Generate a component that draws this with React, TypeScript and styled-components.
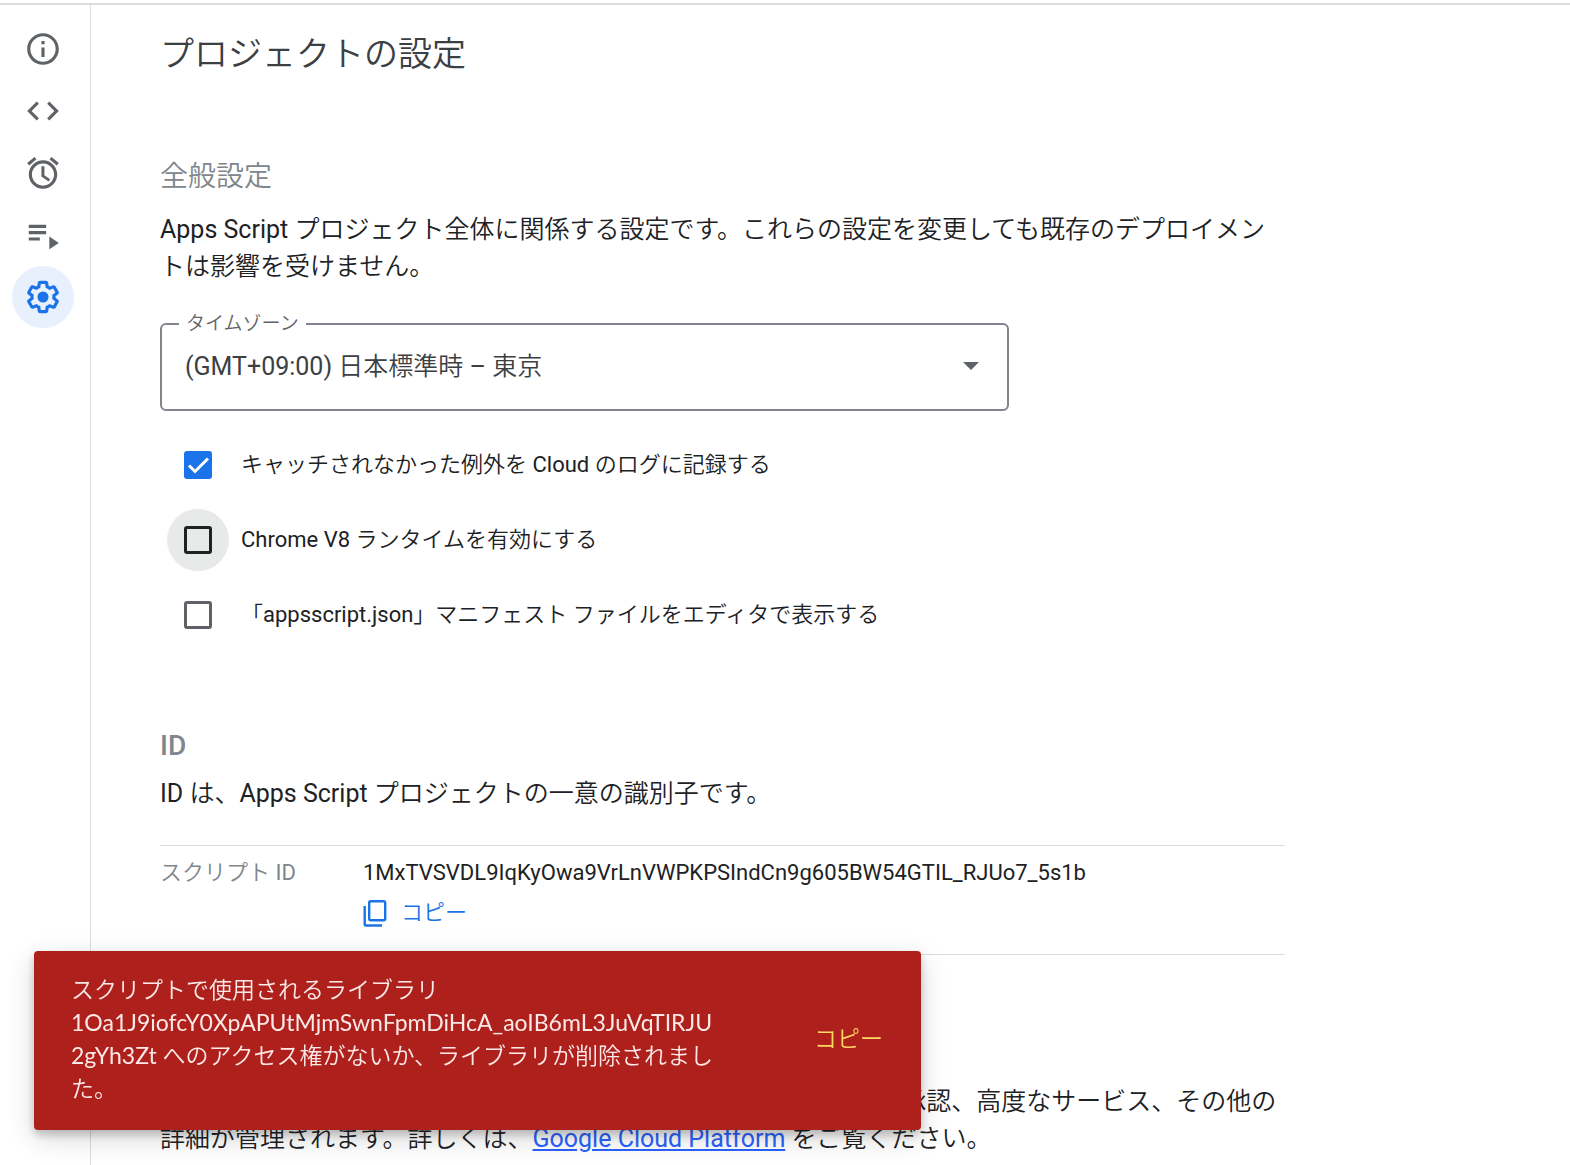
import React from "react";
import styled, { createGlobalStyle, css } from "styled-components";

const line = "#dadce0";
const ink = "#202124";
const grey = "#5f6368";
const muted = "#80868b";
const blue = "#1a73e8";
const cjk = `"Noto Sans CJK JP DemiLight", "Noto Sans CJK JP Light", "Noto Sans CJK JP", sans-serif`;

const GlobalStyle = createGlobalStyle`
  * { box-sizing: border-box; }
  body {
    margin: 0;
    background: #fff;
    color: ${ink};
    font: 400 25px/37px Roboto, ${cjk};
    overflow: hidden;
  }
  button, select, input { font: inherit; color: inherit; margin: 0; }
`;

const Page = styled.div`
  display: flex;
  height: 100vh;
  padding-top: 3px;
`;

const Shell = styled.div`
  display: flex;
  flex: 1;
  min-width: 0;
  border-top: 2px solid ${line};
`;

const Sidebar = styled.nav`
  display: flex;
  flex-direction: column;
  align-items: center;
  flex: 0 0 91px;
  padding: 13px 16px 0 12px;
  border-right: 1px solid ${line};
`;

const NavButton = styled.button<{ $active?: boolean }>`
  display: flex;
  align-items: center;
  justify-content: center;
  width: 62px;
  height: 62px;
  padding: 0;
  border: 0;
  border-radius: 50%;
  background: ${(p) => (p.$active ? "#e8f0fe" : "transparent")};
  color: ${(p) => (p.$active ? blue : grey)};
  cursor: pointer;
`;

const Main = styled.main`
  flex: 1;
  min-width: 0;
  overflow: hidden;
  padding: 24px 69px 0;
`;

const Content = styled.div`
  max-width: 1125px;
`;

const Title = styled.h1`
  margin: 0 0 78px;
  color: #3c4043;
  font-size: 34px;
  line-height: 50px;
  font-weight: 400;
`;

const Section = styled.section`
  margin-bottom: 74px;
`;

const Heading = styled.h2`
  margin: 0 0 14px;
  color: ${muted};
  font-size: 28px;
  line-height: 40px;
  font-weight: 400;
`;

const LatinHeading = styled(Heading)`
  margin-bottom: 9px;
  font-weight: 500;
`;

const Text = styled.p`
  margin: 0;
`;

const Link = styled.a`
  color: #2962ff;
`;

const Field = styled.fieldset`
  position: relative;
  width: 849px;
  max-width: 100%;
  margin: 27px 0 16px;
  padding: 0;
  border: 2px solid ${muted};
  border-radius: 6px;
`;

const Legend = styled.legend`
  margin-left: 17px;
  padding: 0 7px;
  color: ${grey};
  font-size: 19px;
  line-height: 24px;
`;

const Select = styled.select`
  display: block;
  width: 100%;
  height: 73px;
  padding: 0 64px 12px 23px;
  border: 0;
  outline: 0;
  appearance: none;
  background: transparent;
  color: #3c4043;
`;

const Caret = styled.svg`
  position: absolute;
  right: 28px;
  top: 26px;
  pointer-events: none;
`;

const Option = styled.label`
  display: flex;
  align-items: center;
  gap: 12px;
  height: 75px;
  padding-left: 7px;
  font-size: 22px;
  line-height: 32px;
  cursor: pointer;
`;

const Ripple = styled.span<{ $hot?: boolean }>`
  display: grid;
  place-items: center;
  width: 62px;
  height: 62px;
  border-radius: 50%;
  background: ${(p) => (p.$hot ? "#e8eae9" : "transparent")};
`;

const Check = styled.input<{ $hot?: boolean }>`
  grid-area: 1 / 1;
  width: 28px;
  height: 28px;
  appearance: none;
  border: 3px solid ${(p) => (p.$hot ? ink : grey)};
  border-radius: 3px;
  ${(p) =>
    p.defaultChecked &&
    css`
      border-color: ${blue};
      background: ${blue};
    `}
`;

const Tick = styled.svg`
  grid-area: 1 / 1;
  pointer-events: none;
`;

const IdList = styled.dl`
  display: grid;
  grid-template-columns: 203px 1fr;
  height: 110px;
  margin: 33px 0 0;
  padding-top: 11px;
  border: solid ${line};
  border-width: 1px 0;
  font-size: 22px;
  line-height: 32px;
`;

const Term = styled.dt`
  color: ${muted};
`;

const Value = styled.dd`
  margin: 0;
`;

const CopyButton = styled.button`
  display: flex;
  align-items: center;
  gap: 14px;
  margin-top: 8px;
  padding: 0;
  border: 0;
  background: none;
  color: ${blue};
  cursor: pointer;
`;

const Toast = styled.div`
  position: fixed;
  left: 34px;
  bottom: 35px;
  display: flex;
  align-items: center;
  justify-content: space-between;
  width: 887px;
  height: 179px;
  padding: 0 38px 4px 37px;
  border-radius: 4px;
  background: #ad201c;
  box-shadow: 0 5px 8px rgba(0, 0, 0, 0.2), 0 8px 28px rgba(0, 0, 0, 0.16);
  color: #fce8e6;
  font-family: Lato, ${cjk};
  font-size: 23px;
  line-height: 33px;
`;

const Message = styled.p`
  margin: 0;
`;

const ToastButton = styled.button`
  padding: 0;
  border: 0;
  background: none;
  color: #fdd663;
  cursor: pointer;
`;

const Icon = ({ children, size = 38 }: { children: React.ReactNode; size?: number }) => (
  <svg width={size} height={size} viewBox="0 0 24 24" fill="currentColor" aria-hidden="true">
    {children}
  </svg>
);

const navItems = [
  {
    label: "概要",
    icon: <path d="M11 7h2v2h-2zm0 4h2v6h-2zm1-9C6.480 2 2 6.480 2 12s4.480 10 10 10 10-4.480 10-10S17.520 2 12 2zm0 18c-4.410 0-8-3.590-8-8s3.590-8 8-8 8 3.590 8 8-3.590 8-8 8z" />,
  },
  {
    label: "エディタ",
    icon: <path d="M9.400 16.600L4.800 12l4.600-4.600L8 6l-6 6 6 6 1.400-1.400zm5.200 0l4.600-4.600-4.600-4.600L16 6l6 6-6 6-1.400-1.400z" />,
  },
  {
    label: "トリガー",
    icon: <path d="M22 5.720l-4.600-3.860-1.290 1.530 4.600 3.860L22 5.720zM7.880 3.390L6.600 1.860 2 5.710l1.290 1.530 4.590-3.850zM12.900 7.800H11v6.400l4.500 3.200 1-1.500-3.600-2.500zM12 4c-4.970 0-9 4.030-9 9s4.020 9 9 9c4.970 0 9-4.030 9-9s-4.030-9-9-9zm0 16c-3.870 0-7-3.130-7-7s3.130-7 7-7 7 3.130 7 7-3.130 7-7 7z" />,
  },
  {
    label: "実行数",
    icon: <path d="M3 5.500h11v2H3zM3 9.500h11v2H3zM3 13.500h7v2H3zM16 13v8l6-4z" />,
  },
  {
    label: "プロジェクトの設定",
    active: true,
    icon: (
      <>
        <path d="M13.850 22.250h-3.700c-.74 0-1.360-.54-1.450-1.270l-.27-1.890c-.27-.14-.53-.29-.79-.46l-1.800.72c-.7.26-1.470-.03-1.810-.65L2.200 15.530c-.35-.66-.2-1.440.36-1.880l1.530-1.190c-.01-.15-.02-.3-.02-.46 0-.15.01-.31.02-.46l-1.520-1.190c-.59-.45-.74-1.260-.37-1.880l1.850-3.190c.34-.62 1.110-.9 1.790-.63l1.810.73c.26-.17.520-.32.780-.46l.27-1.910c.09-.7.710-1.250 1.440-1.250h3.700c.74 0 1.360.54 1.450 1.270l.27 1.890c.27.14.53.29.79.46l1.800-.72c.71-.26 1.480.03 1.820.65l1.840 3.180c.36.66.2 1.440-.36 1.880l-1.520 1.190c.01.15.02.3.02.46s-.01.31-.02.46l1.520 1.190c.56.45.720 1.230.37 1.860l-1.860 3.220c-.34.62-1.110.9-1.800.63l-1.800-.72c-.26.17-.52.32-.78.46l-.27 1.910c-.1.680-.72 1.220-1.460 1.220zm-3.230-2h2.760l.37-2.550.53-.22c.44-.18.880-.44 1.340-.78l.45-.34 2.380.96 1.380-2.400-2.030-1.580.07-.56c.03-.26.06-.51.06-.78s-.03-.53-.06-.78l-.07-.56 2.030-1.580-1.390-2.400-2.390.96-.45-.35c-.42-.32-.87-.58-1.330-.77l-.52-.22-.37-2.550h-2.760l-.37 2.550-.53.21c-.44.190-.88.440-1.340.790l-.45.33-2.380-.95-1.390 2.390 2.030 1.580-.07.56a7 7 0 0 0-.06.79c0 .26.02.53.06.78l.07.56-2.030 1.580 1.380 2.400 2.390-.96.45.35c.43.330.86.580 1.330.770l.53.22z" />
        <circle cx="12" cy="12" r="3.500" />
      </>
    ),
  },
];

export default function App() {
  return (
    <Page>
      <GlobalStyle />
      <Shell>
        <Sidebar>
          {navItems.map((item) => (
            <NavButton key={item.label} aria-label={item.label} $active={item.active}>
              <Icon>{item.icon}</Icon>
            </NavButton>
          ))}
        </Sidebar>
        <Main>
          <Content>
            <Title>プロジェクトの設定</Title>
            <Section>
              <Heading>全般設定</Heading>
              <Text>
                Apps Script プロジェクト全体に関係する設定です。これらの設定を変更しても既存のデプロイメントは影響を受けません。
              </Text>
              <Field>
                <Legend>
                  <label htmlFor="timezone">タイムゾーン</label>
                </Legend>
                <Select id="timezone">
                  <option>(GMT+09:00) 日本標準時 – 東京</option>
                </Select>
                <Caret width="16" height="8" viewBox="0 0 16 8" fill={grey} aria-hidden="true">
                  <path d="M0 0h16L8 8z" />
                </Caret>
              </Field>
              <Option>
                <Ripple>
                  <Check type="checkbox" defaultChecked />
                  <Tick width="28" height="28" viewBox="0 0 28 28" fill="none" stroke="#fff" strokeWidth="3" aria-hidden="true">
                    <path d="M5 14.500l6 6L24 7.500" />
                  </Tick>
                </Ripple>
                キャッチされなかった例外を Cloud のログに記録する
              </Option>
              <Option>
                <Ripple $hot>
                  <Check type="checkbox" $hot />
                </Ripple>
                Chrome V8 ランタイムを有効にする
              </Option>
              <Option>
                <Ripple>
                  <Check type="checkbox" />
                </Ripple>
                「appsscript.json」マニフェスト ファイルをエディタで表示する
              </Option>
            </Section>
            <Section>
              <LatinHeading>ID</LatinHeading>
              <Text>ID は、Apps Script プロジェクトの一意の識別子です。</Text>
              <IdList>
                <Term>スクリプト ID</Term>
                <Value>
                  1MxTVSVDL9IqKyOwa9VrLnVWPKPSIndCn9g605BW54GTIL_RJUo7_5s1b
                  <CopyButton>
                    <svg width="24" height="28" viewBox="0 0 24 28" fill="none" stroke="currentColor" strokeWidth="2.400" aria-hidden="true">
                      <rect x="6.200" y="2.200" width="16" height="19" rx="1.500" />
                      <path d="M1.700 7v18.500a1 1 0 0 0 1 1H19" />
                    </svg>
                    コピー
                  </CopyButton>
                </Value>
              </IdList>
            </Section>
            <Section>
              <Heading>Google Cloud Platform（GCP）プロジェクト</Heading>
              <Text>
                Apps Scriptでは Google Cloud Platform プロジェクトを使用して、承認、高度なサービス、その他の詳細が管理されます。詳しくは、
                <Link href="#gcp">Google Cloud Platform</Link> をご覧ください。
              </Text>
            </Section>
          </Content>
        </Main>
      </Shell>
      <Toast role="alert">
        <Message>
          スクリプトで使用されるライブラリ
          <br />
          1Oa1J9iofcY0XpAPUtMjmSwnFpmDiHcA_aoIB6mL3JuVqTIRJU
          <br />
          2gYh3Zt へのアクセス権がないか、ライブラリが削除されまし
          <br />
          た。
        </Message>
        <ToastButton>コピー</ToastButton>
      </Toast>
    </Page>
  );
}
